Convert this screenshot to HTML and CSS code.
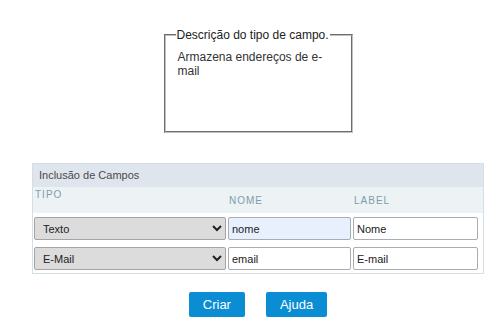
FILE: index.html
```html
<!DOCTYPE html>
<html>
	<head>
		<meta charset="UTF-8">
		<title>Inclusão de Campos</title>
		<link rel="stylesheet" href="styles.css">
	</head>
	<body>
		<div class="page">
			<fieldset class="desc">
				<legend>Descrição do tipo de campo.</legend>
				<div class="desc-text">Armazena endereços de e-mail</div>
			</fieldset>

			<div class="campos">
				<div class="campos-title">Inclusão de Campos</div>
				<div class="campos-head">
					<div class="th th-tipo">TIPO</div>
					<div class="th">NOME</div>
					<div class="th">LABEL</div>
				</div>
				<div class="campos-row">
					<div class="td">
						<select class="sel">
							<option selected>Texto</option>
							<option>E-Mail</option>
						</select>
					</div>
					<div class="td"><input class="inp inp-fill" type="text" value="nome"></div>
					<div class="td td-last"><input class="inp" type="text" value="Nome"></div>
				</div>
				<div class="campos-row">
					<div class="td">
						<select class="sel">
							<option>Texto</option>
							<option selected>E-Mail</option>
						</select>
					</div>
					<div class="td"><input class="inp" type="text" value="email"></div>
					<div class="td td-last"><input class="inp" type="text" value="E-mail"></div>
				</div>
			</div>

			<div class="acoes">
				<button class="btn" type="button">Criar</button>
				<button class="btn" type="button">Ajuda</button>
			</div>
		</div>
	</body>
</html>
```

FILE: styles.css
```css
*{
	margin: 0;
	padding: 0;
	box-sizing: border-box;
}
body{
	font-family: "Liberation Sans", Arial, sans-serif;
	background: #fff;
	color: #333;
}
.page{
	width: 452px;
	margin-left: 32px;
	padding-top: 28px;
}

/* caixa de descricao */
.desc{
	width: 189px;
	margin: 0 auto;
	border: 2px groove #c0c0c0;
	padding: 0 12px 9px 12px;
}
.desc legend{
	font-size: 12px;
	line-height: 14px;
	color: #222;
	padding: 0 1px;
	margin-left: -2px;
}
.desc-text{
	font-size: 12px;
	line-height: 14px;
	color: #333;
	height: 80px;
	padding-top: 8px;
}

/* tabela de campos */
.campos{
	margin-top: 30px;
	border: 1px solid #d3dee6;
}
.campos-title{
	height: 23px;
	line-height: 23px;
	background: #dfe5ec;
	font-size: 11px;
	color: #4a4a4a;
	padding-left: 6px;
}
.campos-head,
.campos-row{
	display: grid;
	grid-template-columns: 194px 125px 1fr;
}
.campos-head{
	height: 26px;
	background: #edf2f5;
}
.th{
	font-size: 10px;
	letter-spacing: 1px;
	color: #7b9ea9;
	padding-left: 2px;
	align-self: center;
}
.th-tipo{
	align-self: start;
	padding-top: 2px;
}
.campos-row{
	padding: 4px 0 3px 0;
	height: 30px;
}
.td{
	padding: 0 1px;
}
.td-last{
	padding-right: 5px;
}
.sel{
	display: block;
	width: 100%;
	height: 23px;
	font-family: "Liberation Sans", Arial, sans-serif;
	font-size: 11px;
	color: #222;
	background-color: #dcdcdc;
	border: 1px solid #a4a4a4;
	border-radius: 2px;
	padding-left: 4px;
}
.inp{
	display: block;
	width: 100%;
	height: 23px;
	font-family: "Liberation Sans", Arial, sans-serif;
	font-size: 11px;
	color: #222;
	background: #fff;
	border: 1px solid #a6adb4;
	border-radius: 2px;
	padding-left: 3px;
	outline: none;
}
.inp-fill{
	background: #e8f0fe;
}

/* botoes */
.acoes{
	display: flex;
	justify-content: center;
	gap: 21px;
	margin-top: 18px;
}
.btn{
	height: 25px;
	padding: 0 14px;
	background: #0b8dd3;
	color: #fff;
	border: none;
	border-radius: 2px;
	font-family: "Liberation Sans", Arial, sans-serif;
	font-size: 13px;
}
```
